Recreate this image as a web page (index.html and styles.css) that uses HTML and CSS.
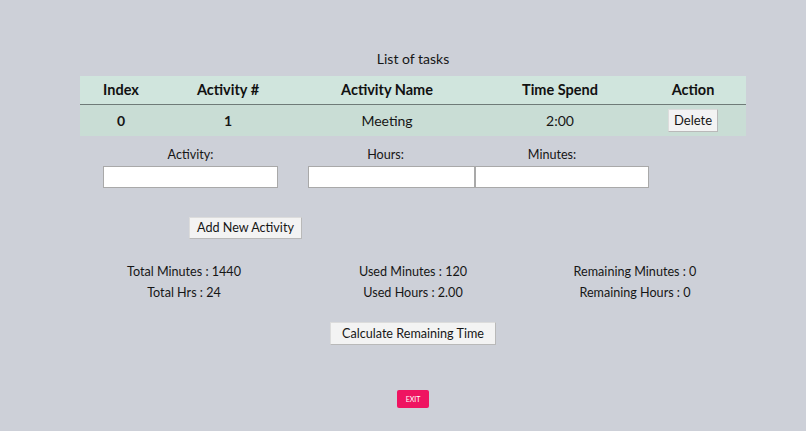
FILE: index.html
```html
<!DOCTYPE html>
<html lang="en">
<head>
<meta charset="utf-8">
<title>Time Tracker</title>
<link rel="stylesheet" href="styles.css">
</head>
<body>
<main class="page">
  <h1 class="title">List of tasks</h1>
  <table class="tasks">
    <thead>
      <tr>
        <th class="c-index">Index</th>
        <th class="c-num">Activity #</th>
        <th class="c-name">Activity Name</th>
        <th class="c-time">Time Spend</th>
        <th class="c-action">Action</th>
      </tr>
    </thead>
    <tbody>
      <tr>
        <td class="strong">0</td>
        <td class="strong">1</td>
        <td>Meeting</td>
        <td>2:00</td>
        <td><button class="btn btn-delete">Delete</button></td>
      </tr>
    </tbody>
  </table>

  <form class="entry">
    <div class="field f-activity">
      <label>Activity:</label>
      <input type="text">
    </div>
    <div class="field f-hours">
      <label>Hours:</label>
      <input type="text">
    </div>
    <div class="field f-minutes">
      <label>Minutes:</label>
      <input type="text">
    </div>
  </form>

  <div class="add-row">
    <button class="btn btn-add">Add New Activity</button>
  </div>

  <section class="stats">
    <div class="stat"><p>Total Minutes : 1440</p><p>Total Hrs : 24</p></div>
    <div class="stat"><p>Used Minutes : 120</p><p>Used Hours : 2.00</p></div>
    <div class="stat"><p>Remaining Minutes : 0</p><p>Remaining Hours : 0</p></div>
  </section>

  <div class="calc-row">
    <button class="btn btn-calc">Calculate Remaining Time</button>
  </div>

  <div class="exit-row">
    <button class="btn-exit">EXIT</button>
  </div>
</main>
</body>
</html>
```

FILE: styles.css
```css
* { box-sizing: border-box; }

html, body {
  margin: 0;
  height: 100%;
}

body {
  background: #cdd0d8;
  color: #161616;
  font-family: Lato, "Open Sans", sans-serif;
  font-size: 12.6px;
}

.page {
  width: 666px;
  margin-left: 80px;
  padding-top: 50px;
}

.title {
  margin: 0 0 8px;
  font-size: 14px;
  font-weight: 400;
  text-align: center;
  line-height: 18px;
}

/* task table */
.tasks {
  width: 100%;
  border-collapse: collapse;
  table-layout: fixed;
}

.c-index { width: 82px; }
.c-num { width: 132px; }
.c-name { width: 186px; }
.c-time { width: 160px; }
.c-action { width: 106px; }

.tasks th {
  height: 28px;
  background: #d0e5dd;
  font-weight: 700;
  font-size: 14.5px;
  color: #111;
  border-bottom: 1px solid #6f7b78;
  text-align: center;
  padding: 0;
}

.tasks td {
  height: 32px;
  background: #c9ddd5;
  text-align: center;
  padding: 0;
  font-size: 14px;
}

.tasks td.strong { font-weight: 700; }

/* generic push button */
.btn {
  font-family: inherit;
  font-size: 12.6px;
  color: #161616;
  background: #f3f3f3;
  border: 1px solid #dcdcdc;
  border-right-color: #b9b9b9;
  border-bottom-color: #b9b9b9;
  padding: 0 9px;
  height: 22px;
  line-height: 20px;
  white-space: nowrap;
  cursor: pointer;
}

.btn-delete {
  width: 50px;
  height: 23px;
  padding: 0;
  font-size: 13px;
}

/* entry form */
.entry {
  display: grid;
  grid-template-columns: 175px 167px 174px;
  column-gap: 30px;
  margin: 10px 0 0 23px;
}

.entry .f-minutes {
  margin-left: -30px;
  width: 174px;
}

.field {
  display: flex;
  flex-direction: column;
}

.field label {
  text-align: center;
  line-height: 18px;
  height: 20px;
}

.f-hours label { padding-right: 12px; }
.f-minutes label { padding-right: 20px; }

.field input {
  height: 22px;
  border: 1px solid #a9a9a9;
  background: #fff;
  margin: 0;
  font-family: inherit;
}

.add-row {
  margin: 29px 0 0 109px;
}

.btn-add { width: 113px; padding: 0; }

/* summary figures */
.stats {
  display: grid;
  grid-template-columns: 208px 250px 194px;
  margin-top: 22px;
}

.stat { text-align: center; }

.stat p {
  margin: 0;
  line-height: 21px;
}

.calc-row {
  margin-top: 19px;
  display: flex;
  justify-content: center;
}

.btn-calc { height: 23px; width: 166px; padding: 0; }

.exit-row {
  margin-top: 45px;
  display: flex;
  justify-content: center;
}

.btn-exit {
  width: 32px;
  height: 18px;
  border: 0;
  border-radius: 2px;
  background: #ef1461;
  color: #fff;
  font-family: inherit;
  font-size: 7px;
  padding: 0;
  line-height: 18px;
}
```
